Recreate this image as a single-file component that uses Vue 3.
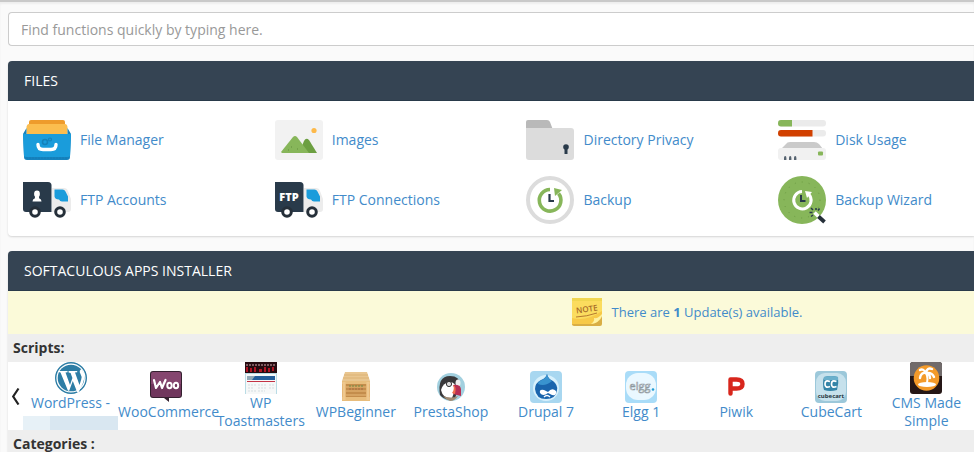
<script setup>
import { ref } from 'vue'

const query = ref('')
const files = [
  { id: 'manager', label: 'File Manager' },
  { id: 'images', label: 'Images' },
  { id: 'privacy', label: 'Directory Privacy' },
  { id: 'disk', label: 'Disk Usage' },
  { id: 'ftp', label: 'FTP Accounts' },
  { id: 'ftpconn', label: 'FTP Connections' },
  { id: 'backup', label: 'Backup' },
  { id: 'wizard', label: 'Backup Wizard' }
]
const scripts = [
  { id: 'wordpress', label: 'WordPress -', masked: true },
  { id: 'woo', label: 'WooCommerce' },
  { id: 'toast', label: 'WP Toastmasters' },
  { id: 'beginner', label: 'WPBeginner' },
  { id: 'presta', label: 'PrestaShop' },
  { id: 'drupal', label: 'Drupal 7' },
  { id: 'elgg', label: 'Elgg 1' },
  { id: 'piwik', label: 'Piwik' },
  { id: 'cube', label: 'CubeCart' },
  { id: 'cms', label: 'CMS Made Simple' }
]
</script>

<template>
  <main class="page">
    <input v-model="query" class="search" type="text" aria-label="Find functions" placeholder="Find functions quickly by typing here." />

    <section class="panel files">
      <h2>FILES</h2>
      <div class="file-grid">
        <a v-for="f in files" :key="f.id" class="file" href="#">
          <svg class="file-icon" viewBox="0 0 48 48" aria-hidden="true">
            <g v-if="f.id === 'manager'">
              <path d="M8 4h32q2 0 2 2v10H6V6q0-2 2-2z" fill="#ee9b2c" />
              <path d="M6 8h36q2 0 2.500 3v9h-41v-9q.5-3 2.500-3z" fill="#fbbd4f" />
              <path d="M3.500 12v7h41v-7l3.500 6v2l-1 21q0 3-3 3H4q-3 0-3-3L0 18z" fill="#1583bf" />
              <path d="M0 18h48l-1 22q0 1-3 1H4q-3 0-3-1z" fill="#1a9cdb" />
              <circle cx="22" cy="26" r="2.500" fill="none" stroke="#1482ba" stroke-width="1.600" />
              <circle cx="27" cy="23.500" r="1.500" fill="none" stroke="#1482ba" stroke-width="1.200" />
              <path d="M15 28.500q0 5 5 5h8q5 0 5-5" fill="none" stroke="#fff" stroke-width="3.400" stroke-linecap="round" />
              <path d="M3 42h42" stroke="#147cb5" stroke-dasharray="2 1" />
            </g>
            <g v-else-if="f.id === 'images'">
              <rect y="4" width="48" height="40" rx="3" fill="#f2f2f2" />
              <circle cx="39" cy="14.500" r="2.600" fill="#fdb94a" />
              <path d="M24 37l5-12q2-4 5-1l8 13z" fill="#6c9f41" />
              <path d="M6 36l12-15q2-2 4 0l12 16H7z" fill="#87b65a" />
              <path d="M16 31h1m5 2h1m-10 1h1" stroke="#638f3d" />
            </g>
            <g v-else-if="f.id === 'privacy'">
              <path d="M0 14V6q0-2 2-2h19q2 0 3 2l3 8z" fill="#b9b9b9" />
              <path d="M0 12h45q3 0 3 3v26q0 3-3 3H3q-3 0-3-3z" fill="#dcdcdc" />
              <circle cx="40" cy="31" r="2.800" fill="#293a4a" />
              <path d="M38.500 31h3v7h-3z" fill="#293a4a" />
            </g>
            <g v-else-if="f.id === 'disk'">
              <rect y="4" width="48" height="6.500" rx="3" fill="#ebebeb" />
              <path d="M14 4H3q-3 0-3 3.250t3 3.250h11z" fill="#87b65a" />
              <rect y="14" width="48" height="6.500" rx="3" fill="#ebebeb" />
              <path d="M34.500 14H3q-3 0-3 3.250t3 3.250h31.500z" fill="#d14000" />
              <path d="M12 26h24q3 0 5 2l4 5H3l5-5q1-2 4-2z" fill="#cacaca" />
              <rect y="32" width="48" height="12" rx="3" fill="#f1f1f1" />
              <rect x="40" y="35.500" width="5" height="4" rx="1" fill="#87b65a" />
              <path d="M6 44v-2q0-2 1.200-2t1.200 2v2m2.600 0v-2q0-2 1.200-2t1.200 2v2m2.600 0v-2q0-2 1.200-2t1.200 2v2" fill="#566370" />
            </g>
            <g v-else-if="f.id === 'ftp' || f.id === 'ftpconn'">
              <path d="M29 12h12q3 0 4 3l3 8v10q0 3-3 3H29z" fill="#ececec" />
              <path d="M31.500 13.500h8q2 0 3 2l2.500 5v5h-6q-2 0-3-2-4 0-4.500-3z" fill="#1a9cdb" />
              <path d="M0 6h25q3.500 0 3.500 3.500V36H3q-3 0-3-3z" fill="#293a4a" />
              <g v-if="f.id === 'ftp'" fill="#fff">
                <ellipse cx="14" cy="18" rx="2.900" ry="3.400" />
                <path d="M12.500 19h3l.8 3.500q2.200.3 2.200 3h-9q0-2.700 2.200-3z" />
              </g>
              <text v-else x="14" y="25" text-anchor="middle" class="ftp-text">FTP</text>
              <g fill="#fff" stroke="#252f39" stroke-width="3">
                <circle cx="12" cy="36" r="4.300" /><circle cx="37" cy="36" r="4.300" />
              </g>
            </g>
            <g v-else-if="f.id === 'backup'">
              <circle cx="24" cy="24" r="22" fill="#fff" stroke="#dcdcdc" stroke-width="4" />
              <path d="M24 13.500a10.800 10.800 0 1 0 8.500 4" fill="none" stroke="#87b65a" stroke-width="3.600" />
              <path d="M28 12l8 2-7 6z" fill="#87b65a" />
              <path d="M23.500 18v7h4.500" fill="none" stroke="#293a4a" stroke-width="2.200" />
            </g>
            <g v-else>
              <circle cx="24" cy="24" r="24" fill="#87b65a" />
              <circle cx="24" cy="24" r="18" fill="none" stroke="#6c9a43" stroke-dasharray="1 6" />
              <path d="M24 15.500a8.700 8.700 0 1 0 7 3" fill="none" stroke="#fff" stroke-width="3" />
              <path d="M27 15l7 1-5 6z" fill="#fff" />
              <path d="M23 19v6h4.500" fill="none" stroke="#293a4a" stroke-width="2" />
              <path d="M31.500 36.500h3M33 32l2 2m3-2v2m3.500-1.500l-1.500 2M33 40.500l2-1.500" stroke="#293a4a" stroke-width="1.500" />
              <path d="M36.500 36.500l4 4" stroke="#fff" stroke-width="3.500" />
              <path d="M40.500 40.500l6 5.500" stroke="#252f39" stroke-width="3.800" />
            </g>
          </svg>
          <span>{{ f.label }}</span>
        </a>
      </div>
    </section>

    <section class="panel">
      <h2>SOFTACULOUS APPS INSTALLER</h2>
      <div class="notice">
        <a href="#">
          <svg class="note" viewBox="0 0 30 28" aria-hidden="true">
            <path d="M0 0h30v18q-2 7-10 9H0z" fill="#fbdc5e" />
            <path d="M0 0h30v3H0z" fill="#f0d650" />
            <path d="M0 20q14 4 30-7v5q-2 6-10 8H0z" fill="#f7c948" />
            <path d="M0 26h20q8-2 10-8v8q0 2-2 2H2q-2 0-2-2z" fill="#d9ae45" />
            <path d="M19 26q4-3 3-6 4 1 8-4v2q-3 7-11 8z" fill="#fff2a0" />
            <path d="M4 19q11-.5 21-4" fill="none" stroke="#b5792f" />
            <text x="15" y="14" text-anchor="middle" transform="rotate(-8 15 12)" class="note-text">NOTE</text>
          </svg>
          <span>There are <strong>1</strong> Update(s) available.</span>
        </a>
      </div>
      <h3>Scripts:</h3>
      <div class="carousel">
        <button type="button" aria-label="Previous scripts">
          <svg viewBox="0 0 10 18" aria-hidden="true"><path d="M8.500 1.500L3.200 9.500l5.300 8" fill="none" stroke="#222" stroke-width="2.200" /></svg>
        </button>
        <div class="scripts">
          <a v-for="s in scripts" :key="s.id" class="script" href="#">
            <svg class="app-icon" viewBox="0 0 32 32" aria-hidden="true">
              <g v-if="s.id === 'wordpress'">
                <circle cx="16" cy="16" r="15.300" fill="#fff" stroke="#2d7da5" stroke-width="1.400" />
                <circle cx="16" cy="16" r="13.300" fill="#2d7da5" />
                <path d="M3.500 9h9v1.200l-2 .3 4.500 12.500 2.400-7-1.800-5-2-.6V9h8.600v1.200l-2.200.3 4.500 12.500 1.700-5.500q1-3-.7-5.500-2-3.500 1-5l3 5q.5 4-1.500 9l-4.500 9.500h-1.200L17.800 19l-3.600 9.800H13L5.500 10.500l-2-.4z" fill="#fff" />
              </g>
              <g v-else-if="s.id === 'woo'">
                <path d="M3 0h26q3 0 3 3v21q0 3-3 3H19v4l-5-4H3q-3 0-3-3V3q0-3 3-3z" fill="#34202f" />
                <path d="M3 1h26q2 0 2 2v10H1V3q0-2 2-2z" fill="#85466f" />
                <path d="M1 13h30v11q0 2-2 2H3q-2 0-2-2z" fill="#70365d" />
                <path d="M4 9l2 8 4-6 2 6 3.500-8" fill="none" stroke="#fff" stroke-width="2.200" stroke-linejoin="round" stroke-linecap="round" />
                <g fill="none" stroke="#fff" stroke-width="2"><ellipse cx="19.500" cy="14.500" rx="2.200" ry="2.800" /><ellipse cx="26" cy="14.500" rx="2.200" ry="2.800" /></g>
              </g>
              <g v-else-if="s.id === 'toast'">
                <path d="M0 0h32v32H0z" fill="#b9dce5" />
                <path d="M0 0h32v11H0z" fill="#260b10" />
                <path d="M1 5h2v5H1zm4 1h2v4H5zm4-1h2v5H9zm5 2h3v3h-3zm5-2h2v5h-2zm4 1h2v4h-2zm4-1h2v4h-2z" fill="#b01424" />
                <path d="M1 3h29" stroke="#d6abb0" stroke-dasharray="2 1" />
                <path d="M1 12h30v20H1z" fill="#f6f8f8" />
                <path d="M2 14h28v4H2z" fill="#245f9b" />
                <path d="M2 14h8l-3 4H2z" fill="#91a8b6" />
                <path d="M2 19.500h28" stroke="#c33345" />
                <path d="M3 23h8m2 0h8m3 0h5M3 26h6m4 0h8m3 0h5M3 29h8m2 0h7" stroke="#d5dee1" stroke-dasharray="2 1" />
              </g>
              <g v-else-if="s.id === 'beginner'">
                <path d="M5 1h22l3 9H2z" fill="#e9c690" />
                <path d="M4 4h24M3 7h26" stroke="#dcb275" stroke-width="1" />
                <path d="M2 10h28v20H2z" fill="#dca761" />
                <path d="M2 10h28v3H2zm0 16h28v4H2z" fill="#e8bd7c" />
                <path d="M6 13h20v13H6z" fill="#c48d4c" />
                <path d="M6 16h20M6 20h20M6 24h20" stroke="#d6a362" stroke-width="2" />
                <path d="M4 11v18M28 11v18" stroke="#efc88e" stroke-width="3" />
                <path d="M9 15h14" stroke="#6f8a45" stroke-dasharray="2 1" />
                <path d="M9 18h14" stroke="#a66843" stroke-dasharray="2 1" />
              </g>
              <g v-else-if="s.id === 'presta'">
                <circle cx="16" cy="16" r="14" fill="#a2d0df" />
                <path d="M5 24Q2 5 15 5q10 0 10 9l-5 13q-9 4-15-3z" fill="#39383a" />
                <path d="M6 19q2-7 8-8 8 0 6 8l-3 8q-9 1-11-8z" fill="#fff" />
                <circle cx="14" cy="13" r="2.600" fill="#ddd" stroke="#333" />
                <ellipse cx="23" cy="12" rx="2.500" ry="3.500" fill="#eee" />
                <path d="M18 14q7-1 8 4v7l-8-2q3-4 0-9z" fill="#b72f53" />
                <path d="M18 14q4 1 2 9l-3-1q3-4 1-8z" fill="#ef714e" />
                <path d="M8 25q8 3 15 0-3 5-8 5-4-1-7-5z" fill="#a18b72" />
              </g>
              <g v-else-if="s.id === 'drupal'">
                <rect width="32" height="32" rx="4" fill="#a8d7f0" />
                <circle cx="16" cy="17" r="13" fill="#d8f1fc" />
                <path d="M17 3q1 5 6 7 5 4 4 9-1 9-11 9T5 18q0-6 6-9 5-2 6-6z" fill="#1a65ad" />
                <path d="M17 3q1 5 5 7-7 6-14 3 0-3 4-4 4-2 5-6z" fill="#3993cf" />
                <path d="M10 22q-1-4 4-3l4 2q4-5 8-1 1 5-4 4l-4-2q-5 4-8 0z" fill="#fff" />
                <path d="M14 26q3-3 6 0" fill="none" stroke="#fff" stroke-width="1.400" />
              </g>
              <g v-else-if="s.id === 'elgg'">
                <rect width="32" height="32" rx="4" fill="#a9dcf8" />
                <rect x="1" y="2" width="30" height="27" rx="12" fill="#eaf8ff" />
                <text x="15" y="19" text-anchor="middle" class="elgg-text">elgg</text>
                <circle cx="28" cy="18.500" r="1.300" fill="#219cd5" />
              </g>
              <g v-else-if="s.id === 'piwik'">
                <path d="M10.500 22.500V8.500h6q6 0 6 4.500t-6 4.500h-4" fill="none" stroke="#d8261c" stroke-width="4.400" stroke-linejoin="round" stroke-linecap="round" />
              </g>
              <g v-else-if="s.id === 'cube'">
                <rect width="32" height="32" rx="4" fill="#9cc8da" />
                <rect x="1" y="2" width="30" height="28" rx="9" fill="#c6e1ec" />
                <path d="M9 6q7-2 14 0 1 6-1 13-7 2-13 0-2-7 0-13z" fill="#3484a7" />
                <path d="M9 6q7-2 14 0v3H9z" fill="#6bb0cc" />
                <g fill="none" stroke="#fff" stroke-width="1.700"><path d="M15 10.500q-5-2-5 2.500t5 2.500M21.500 10.500q-5-2-5 2.500t5 2.500" /></g>
                <text x="16" y="27" text-anchor="middle" class="cube-text">cubecart</text>
              </g>
              <g v-else>
                <rect width="32" height="32" rx="3" fill="#251716" />
                <path d="M3 0h26q3 0 3 3v11H0V3q0-3 3-3z" fill="#706a6a" />
                <circle cx="16.500" cy="16" r="12.800" fill="#f39a29" />
                <ellipse cx="17" cy="22.500" rx="9" ry="2.500" fill="#fff" />
                <path d="M16 23q3-6 0-12" fill="none" stroke="#fff" stroke-width="2" />
                <path d="M16 11q-5-1-6 5m6-5q-3-5-6-3m6 3q1-6 6-4m-6 4q6-1 8 4m-8-4q4 1 4 5" fill="none" stroke="#fff" stroke-width="2.400" stroke-linecap="round" />
              </g>
            </svg>
            <span>{{ s.label }}</span>
            <i v-if="s.masked" class="mask"></i>
          </a>
        </div>
      </div>
      <h3>Categories :</h3>
    </section>
  </main>
</template>

<style>
body { background: #fafafa; overflow: hidden; }
</style>

<style scoped>
* { box-sizing: border-box; }
.page {
  padding: 10px 0 0 8px;
  border-top: 2px solid #c9c9c9;
  box-shadow: inset 0 2px 2px #eee;
  font: 14px/20px "Open Sans", sans-serif;
  color: #333;
}
.search {
  display: block;
  width: 100%;
  height: 34px;
  margin-bottom: 15px;
  padding: 6px 12px;
  border: 1px solid #ccc;
  border-right: 0;
  border-radius: 4px 0 0 4px;
  background: #fff;
  font: inherit;
}
.search::placeholder { color: #999; opacity: 1; }
.panel {
  margin-bottom: 15px;
  border-radius: 4px 0 0 4px;
  background: #fff;
  box-shadow: 0 1px 2px rgba(0, 0, 0, 0.15);
  overflow: hidden;
}
h2 {
  margin: 0;
  padding: 10px 16px 9px;
  border-bottom: 1px solid #293a4a;
  background: #354453;
  color: #fff;
  font-size: 14px;
  font-weight: 400;
}
a { color: #428bca; text-decoration: none; }
.file-grid {
  display: grid;
  grid-template-columns: repeat(3, 9fr) 7fr;
  row-gap: 12px;
  padding: 15px 0 12px 15px;
}
.file { display: flex; align-items: center; gap: 9px; }
.file-icon { width: 48px; height: 48px; }
.ftp-text { font: 800 11px "Open Sans", sans-serif; fill: #fff; }
.notice {
  display: grid;
  grid-template-columns: 23fr auto 7fr;
  padding: 7px 0 8px;
  background: #fbfad9;
  font-size: 13px;
}
.notice a { grid-column: 2; display: flex; align-items: center; gap: 10px; }
.note { width: 30px; height: 28px; }
.note-text { font: 600 8px "Open Sans", sans-serif; fill: #a66a29; }
h3 {
  margin: 0;
  padding: 4px 5px;
  background: #eee;
  font-size: 14px;
  font-weight: 700;
}
.carousel { display: flex; align-items: center; }
.carousel button {
  width: 15px;
  padding: 0 0 0 2px;
  border: 0;
  background: none;
}
.carousel button svg { display: block; width: 10px; height: 18px; }
.scripts {
  flex: 1;
  display: grid;
  grid-template-columns: repeat(10, minmax(0, 1fr));
  min-height: 68px;
}
.script {
  display: flex;
  flex-direction: column;
  align-items: center;
  justify-content: center;
  line-height: 18px;
  text-align: center;
}
.script span { max-width: 100%; }
.app-icon { width: 32px; height: 32px; flex: none; }
.elgg-text { font: 11px "Open Sans", sans-serif; fill: #fff; stroke: #8b969c; stroke-width: 0.6px; }
.cube-text { font: 700 6px "Open Sans", sans-serif; fill: #25343c; }
.mask {
  width: 100%;
  height: 14px;
  margin-top: 4px;
  background: linear-gradient(90deg, #e7f1f7 28%, #d9e7f1 28%);
}
</style>
